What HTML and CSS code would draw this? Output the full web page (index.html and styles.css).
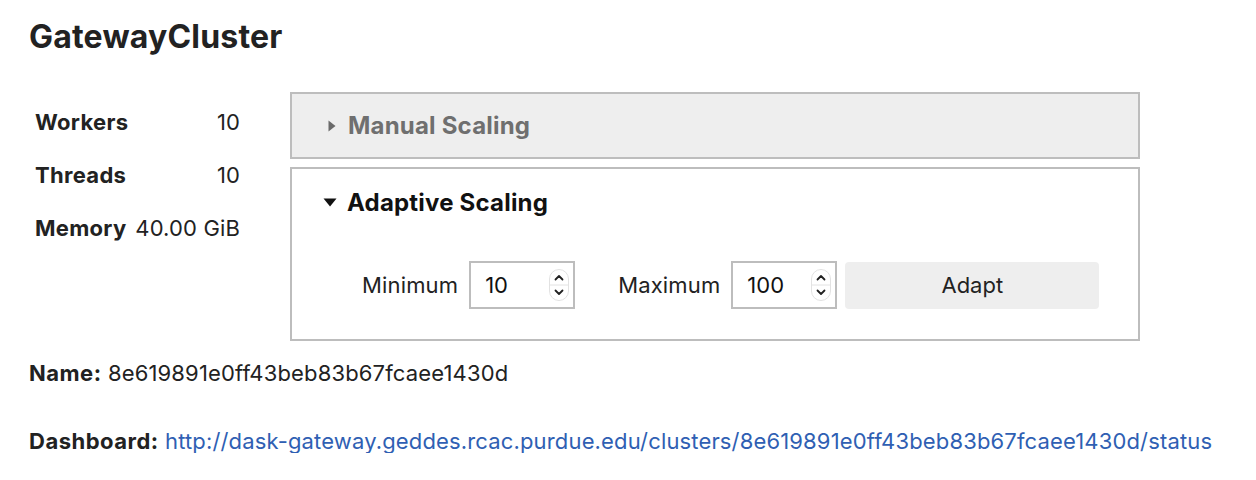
FILE: index.html
```html
<!DOCTYPE html>
<html>
<head>
<meta charset="utf-8">
<link rel="stylesheet" href="styles.css">
</head>
<body>
<div class="widget">
  <h2 class="title">GatewayCluster</h2>
  <div class="main">
    <div class="stats-wrap">
      <table class="stats">
        <tr><th>Workers</th><td>10</td></tr>
        <tr><th>Threads</th><td>10</td></tr>
        <tr><th>Memory</th><td>40.00 GiB</td></tr>
      </table>
    </div>
    <div class="accordion">
      <div class="panel panel-closed">
        <div class="panel-head">
          <svg class="tri" width="8" height="12" viewBox="0 0 8 12"><path d="M0.5 0.5 L7.5 6 L0.5 11.5 Z" fill="#6a6a6a"/></svg>
          <span>Manual Scaling</span>
        </div>
      </div>
      <div class="panel panel-open">
        <div class="panel-head open">
          <svg class="tri-down" width="14" height="9" viewBox="0 0 14 9"><path d="M0.5 0.5 L13.5 0.5 L7 8.5 Z" fill="#111"/></svg>
          <span>Adaptive Scaling</span>
        </div>
        <div class="controls">
          <label class="lbl">Minimum</label>
          <div class="numbox">
            <input class="num" type="text" value="10">
            <svg class="spin" width="20" height="32" viewBox="0 0 20 32">
              <rect x="0.5" y="0.5" width="19" height="31" rx="9.5" fill="#fff" stroke="#e2e2e2"/>
              <line x1="1" y1="16" x2="19" y2="16" stroke="#e2e2e2"/>
              <path d="M6.5 10.5 L10 7 L13.5 10.5" fill="none" stroke="#222" stroke-width="1.8" stroke-linecap="round" stroke-linejoin="round"/>
              <path d="M6.5 21.5 L10 25 L13.5 21.5" fill="none" stroke="#222" stroke-width="1.8" stroke-linecap="round" stroke-linejoin="round"/>
            </svg>
          </div>
          <label class="lbl lbl-max">Maximum</label>
          <div class="numbox">
            <input class="num" type="text" value="100">
            <svg class="spin" width="20" height="32" viewBox="0 0 20 32">
              <rect x="0.5" y="0.5" width="19" height="31" rx="9.5" fill="#fff" stroke="#e2e2e2"/>
              <line x1="1" y1="16" x2="19" y2="16" stroke="#e2e2e2"/>
              <path d="M6.5 10.5 L10 7 L13.5 10.5" fill="none" stroke="#222" stroke-width="1.8" stroke-linecap="round" stroke-linejoin="round"/>
              <path d="M6.5 21.5 L10 25 L13.5 21.5" fill="none" stroke="#222" stroke-width="1.8" stroke-linecap="round" stroke-linejoin="round"/>
            </svg>
          </div>
          <button class="btn">Adapt</button>
        </div>
      </div>
    </div>
  </div>
  <p class="info name"><strong>Name:</strong> 8e619891e0ff43beb83b67fcaee1430d</p>
  <p class="info dash"><strong>Dashboard:</strong> <a href="#">http://dask-gateway.geddes.rcac.purdue.edu/clusters/8e619891e0ff43beb83b67fcaee1430d/status</a></p>
</div>
</body>
</html>
```

FILE: styles.css
```css
html, body {
  margin: 0;
  padding: 0;
  background: #fff;
}
body {
  font-family: Inter, "Noto Sans", "Liberation Sans", sans-serif;
  font-size: 22px;
  letter-spacing: 0.15px;
  color: #222;
}
strong {
  letter-spacing: 0.5px;
}
.widget {
  padding: 16px 0 0 29px;
}
.title {
  margin: 0;
  font-size: 32px;
  font-weight: 700;
  line-height: 42px;
  letter-spacing: 0.2px;
  color: #222;
}
.main {
  display: flex;
  align-items: flex-start;
  margin-top: 34px;
}
.stats-wrap {
  width: 261px;
  flex: none;
  margin-top: 3px;
}
.stats {
  border-collapse: collapse;
}
.stats th {
  text-align: left;
  font-weight: 700;
  padding: 0 7px 0 6px;
  height: 53px;
  white-space: nowrap;
  letter-spacing: 0.3px;
}
.stats td {
  text-align: right;
  padding: 0;
  white-space: nowrap;
}
.accordion {
  width: 850px;
  display: flex;
  flex-direction: column;
  gap: 8px;
}
.panel {
  border: 2px solid #bdbdbd;
}
.panel-closed {
  background: #eeeeee;
}
.panel-head {
  display: flex;
  align-items: center;
  height: 63px;
  padding-left: 36px;
  font-weight: 700;
  color: #6f6f6f;
  font-size: 24px;
  letter-spacing: 0.2px;
}
.panel-head .tri {
  margin-right: 12px;
}
.panel-head.open {
  color: #111;
  height: 66px;
  padding-left: 31px;
}
.tri-down {
  margin-right: 10px;
}
.controls {
  display: flex;
  align-items: center;
  padding: 26px 0 30px 70px;
}
.lbl {
  margin-right: 11px;
}
.lbl-max {
  margin-left: 43px;
}
.numbox {
  display: flex;
  align-items: center;
  width: 102px;
  height: 44px;
  border: 2px solid #bdbdbd;
  background: #fff;
  flex: none;
}
.num {
  border: none;
  outline: none;
  width: 62px;
  padding: 0 0 0 14px;
  font: inherit;
  color: #111;
  background: transparent;
}
.spin {
  margin-left: 2px;
}
.btn {
  margin-left: 8px;
  width: 254px;
  height: 47px;
  border: none;
  border-radius: 4px;
  background: #eeeeee;
  font: inherit;
  color: #222;
}
.info {
  margin: 0;
  line-height: 24px;
}
.name {
  margin-top: 20px;
}
.dash {
  margin-top: 44px;
}
.info a {
  color: #2f5fb3;
  text-decoration: none;
}
```
